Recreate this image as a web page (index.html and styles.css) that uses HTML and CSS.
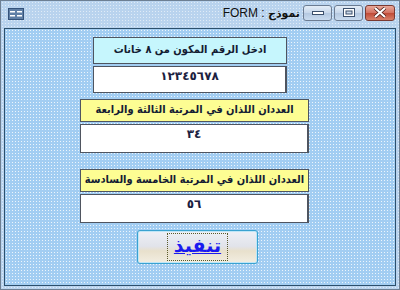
FILE: index.html
```html
<!DOCTYPE html>
<html lang="ar">
<head>
    <meta charset="UTF-8">
    <title>FORM : نموذج</title>
    <link rel="stylesheet" href="styles.css">
</head>
<body>
    <div class="window">
        <div class="titlebar">
            <div class="app-icon">
                <svg width="16" height="12" viewBox="0 0 16 12">
                    <rect x="0.5" y="0.5" width="15" height="11" fill="#5f7fa6" stroke="#34527a"/>
                    <rect x="2" y="3" width="5" height="1.5" fill="#fff"/>
                    <rect x="9" y="3" width="5" height="1.5" fill="#fff"/>
                    <rect x="2" y="7" width="5" height="1.5" fill="#fff"/>
                    <rect x="9" y="7" width="5" height="1.5" fill="#fff"/>
                </svg>
            </div>
            <div class="title" dir="ltr">FORM : <span dir="rtl">نموذج</span></div>
            <div class="controls">
                <button class="ctl">
                    <svg width="12" height="6" viewBox="0 0 12 6"><rect x="0.5" y="1.5" width="11" height="3" fill="#fff" stroke="#3b4f6b"/></svg>
                </button>
                <button class="ctl">
                    <svg width="12" height="9" viewBox="0 0 12 9"><rect x="0.5" y="0.5" width="11" height="8" fill="#fff" stroke="#3b4f6b"/><rect x="3" y="3" width="6" height="3" fill="#c9d8ea" stroke="#3b4f6b"/></svg>
                </button>
                <button class="ctl close">
                    <svg width="14" height="11" viewBox="0 0 14 11"><path d="M2 1 L12 10 M12 1 L2 10" stroke="#4a1a14" stroke-width="3.6"/><path d="M2 1 L12 10 M12 1 L2 10" stroke="#fff" stroke-width="2.2"/></svg>
                </button>
            </div>
        </div>
        <div class="client" dir="rtl">
            <div class="group narrow">
                <div class="label cyan">ادخل الرقم المكون من ٨ خانات</div>
                <div class="value tall">١٢٣٤٥٦٧٨</div>
            </div>
            <div class="group wide">
                <div class="label yellow">العددان اللذان في المرتبة الثالثة والرابعة</div>
                <div class="value">٣٤</div>
            </div>
            <div class="group wide third">
                <div class="label yellow">العددان اللذان في المرتبة الخامسة والسادسة</div>
                <div class="value">٥٦</div>
            </div>
            <button class="run"><span class="focus">تنفيذ</span></button>
        </div>
    </div>
</body>
</html>
```

FILE: styles.css
```css
body {
    margin: 0;
    font-family: "DejaVu Sans", "Liberation Sans", sans-serif;
    background: #ffffff;
}

.window {
    width: 398px;
    height: 288px;
    border: 1px solid #6d7f93;
    background-color: #b9d3ee;
    background-image: radial-gradient(rgba(255, 255, 255, 0.55) 0.6px, transparent 0.9px);
    background-size: 3px 3px;
    display: flex;
    flex-direction: column;
}

.titlebar {
    height: 27px;
    display: flex;
    align-items: center;
    padding: 0 4px 0 7px;
}

.app-icon {
    display: flex;
    margin-top: -2px;
}

.title {
    flex: 1;
    text-align: right;
    font-family: "Liberation Sans", "DejaVu Sans", sans-serif;
    font-size: 12px;
    color: #111;
    padding-right: 3px;
    margin-top: -3px;
}

.title span {
    font-family: "DejaVu Sans", sans-serif;
    font-weight: bold;
    font-size: 11px;
}

.controls {
    display: flex;
    gap: 2px;
    margin-top: -4px;
}

.ctl {
    width: 29px;
    height: 16px;
    padding: 0;
    border: 1px solid #6c7c92;
    border-radius: 3px;
    background: linear-gradient(#e4edf7 0%, #c6d6ea 50%, #b4c8e0 51%, #c9dbef 100%);
    display: flex;
    align-items: center;
    justify-content: center;
}

.ctl.close {
    width: 30px;
    border-color: #7a3a32;
    background: linear-gradient(#e9a89a 0%, #d2705f 50%, #c04a36 51%, #d8806a 100%);
}

.client {
    flex: 1;
    margin: 0 3px 3px 3px;
    border: 1px solid #2c4f6c;
    background-color: #a2cdf2;
    background-image: radial-gradient(rgba(255, 255, 255, 0.8) 0.6px, transparent 0.9px);
    background-size: 3px 3px;
    display: flex;
    flex-direction: column;
    align-items: center;
    padding-top: 8px;
}

.group {
    display: flex;
    flex-direction: column;
    gap: 2px;
}

.narrow {
    width: 194px;
    margin-right: 20px;
    margin-bottom: 6px;
}

.wide {
    width: 229px;
    margin-right: 11px;
}

.third {
    margin-top: 16px;
}

.label {
    box-sizing: border-box;
    border: 1px solid #4f5560;
    font-family: "DejaVu Sans Condensed", "DejaVu Sans", sans-serif;
    font-stretch: condensed;
    font-weight: bold;
    font-size: 11px;
    color: #141c33;
    text-align: center;
    white-space: nowrap;
    height: 23px;
    line-height: 20px;
}

.cyan {
    background: #c6f6fd;
    height: 27px;
    line-height: 24px;
}

.yellow {
    background: #fdfd93;
}

.value {
    box-sizing: border-box;
    border: 1px solid #4f5560;
    border-right-width: 2px;
    background: #ffffff;
    height: 29px;
    font-weight: bold;
    font-size: 12px;
    color: #1b2140;
    text-align: center;
    line-height: 18px;
    letter-spacing: 2px;
}

.value.tall {
    height: 27px;
    line-height: 19px;
}

.run {
    margin-top: 7px;
    margin-right: 5px;
    width: 121px;
    height: 34px;
    padding: 0;
    border: 1px solid #3aa2d0;
    border-radius: 3px;
    background: linear-gradient(#eef0f6 0%, #e1e3ea 48%, #e8e0cc 62%, #f2eee2 100%);
    box-shadow: inset 0 0 0 1px #bfe6f7;
    display: flex;
    align-items: center;
    justify-content: center;
}

.focus {
    border: 1px dotted #5a5a2a;
    padding: 0 6px;
    height: 28px;
    box-sizing: border-box;
    font-family: "DejaVu Sans", sans-serif;
    font-weight: bold;
    font-size: 19px;
    line-height: 22px;
    color: #1a1af0;
    text-decoration: underline;
}
```
